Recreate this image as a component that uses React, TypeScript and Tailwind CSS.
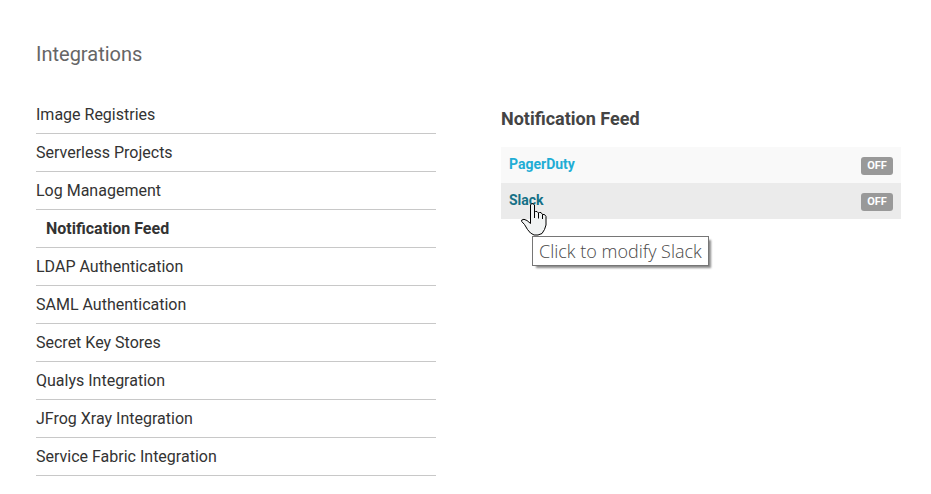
const integrations = [
  "Image Registries",
  "Serverless Projects",
  "Log Management",
  "Notification Feed",
  "LDAP Authentication",
  "SAML Authentication",
  "Secret Key Stores",
  "Qualys Integration",
  "JFrog Xray Integration",
  "Service Fabric Integration",
];

const current = "Notification Feed";

function HandCursor() {
  return (
    <svg
      className="pointer-events-none absolute top-5 left-5 z-10"
      width="26"
      height="33"
      viewBox="0 0 26 33"
      aria-hidden="true"
    >
      <path
        d="M9.5 20.5V2L10.5 .7H12L13.5 2V9L14.5 8.5H16L17.5 10L18.5 9.5H20L21.5 11.5H23.5L25 13.5V22L23.5 26.5L21 30.5L17 32H13L9.5 30L6.5 26.5L3.5 21.5L.7 18.5V17L3 16.3L6 17.5Z"
        fill="#f1f3f3"
        stroke="#000"
        strokeLinejoin="round"
      />
      <path d="M13.5 8V15M17.5 10V15.5M21.5 11.5V16" fill="none" stroke="#000" />
    </svg>
  );
}

function OffBadge() {
  return (
    <span className="h-[18px] w-8 rounded-[3px] bg-[#999] text-center text-[11px] leading-[18px] font-bold text-white">
      OFF
    </span>
  );
}

export default function App() {
  return (
    <main className="bg-white pt-10 pr-[30px] pb-[18px] pl-9 font-[Roboto,sans-serif]">
      <h1 className="text-[20px] leading-7 text-[#666]">Integrations</h1>
      <div className="mt-7 flex gap-[65px]">
        <nav className="flex-1" aria-label="Integrations">
          <ul>
            {integrations.map((name) => (
              <li key={name} className="border-b border-[#c8c8c8]">
                <a
                  href="#"
                  aria-current={name === current ? "page" : undefined}
                  className={
                    name === current
                      ? "block pl-[10px] text-[16px] leading-[37px] font-bold text-[#333]"
                      : "block text-[16px] leading-[37px] text-[#333]"
                  }
                >
                  {name}
                </a>
              </li>
            ))}
          </ul>
        </nav>
        <section className="flex-1 pt-[9px]">
          <h2 className="text-[18px] leading-7 font-bold text-[#444]">Notification Feed</h2>
          <ul className="mt-[14px] text-[14px] font-bold">
            <li className="flex h-9 items-start justify-between bg-[#f9f9f9] px-2 pt-[10px]">
              <a href="#" className="leading-[14px] text-[#1fadd5]">
                PagerDuty
              </a>
              <OffBadge />
            </li>
            <li className="relative flex h-9 items-start justify-between bg-[#ebebeb] px-2 pt-[10px]">
              <a href="#" className="leading-[14px] text-[#147086]" aria-describedby="slack-tip">
                Slack
              </a>
              <OffBadge />
              <HandCursor />
              <div
                id="slack-tip"
                role="tooltip"
                className="absolute top-[53px] left-[31px] border border-[#767676] bg-white px-[6px] font-['Open_Sans',sans-serif] text-[18px] leading-7 font-light whitespace-nowrap text-[#484848] shadow-[3px_3px_2px_-1px_#8a8a8a]"
              >
                Click to modify Slack
              </div>
            </li>
          </ul>
        </section>
      </div>
    </main>
  );
}
